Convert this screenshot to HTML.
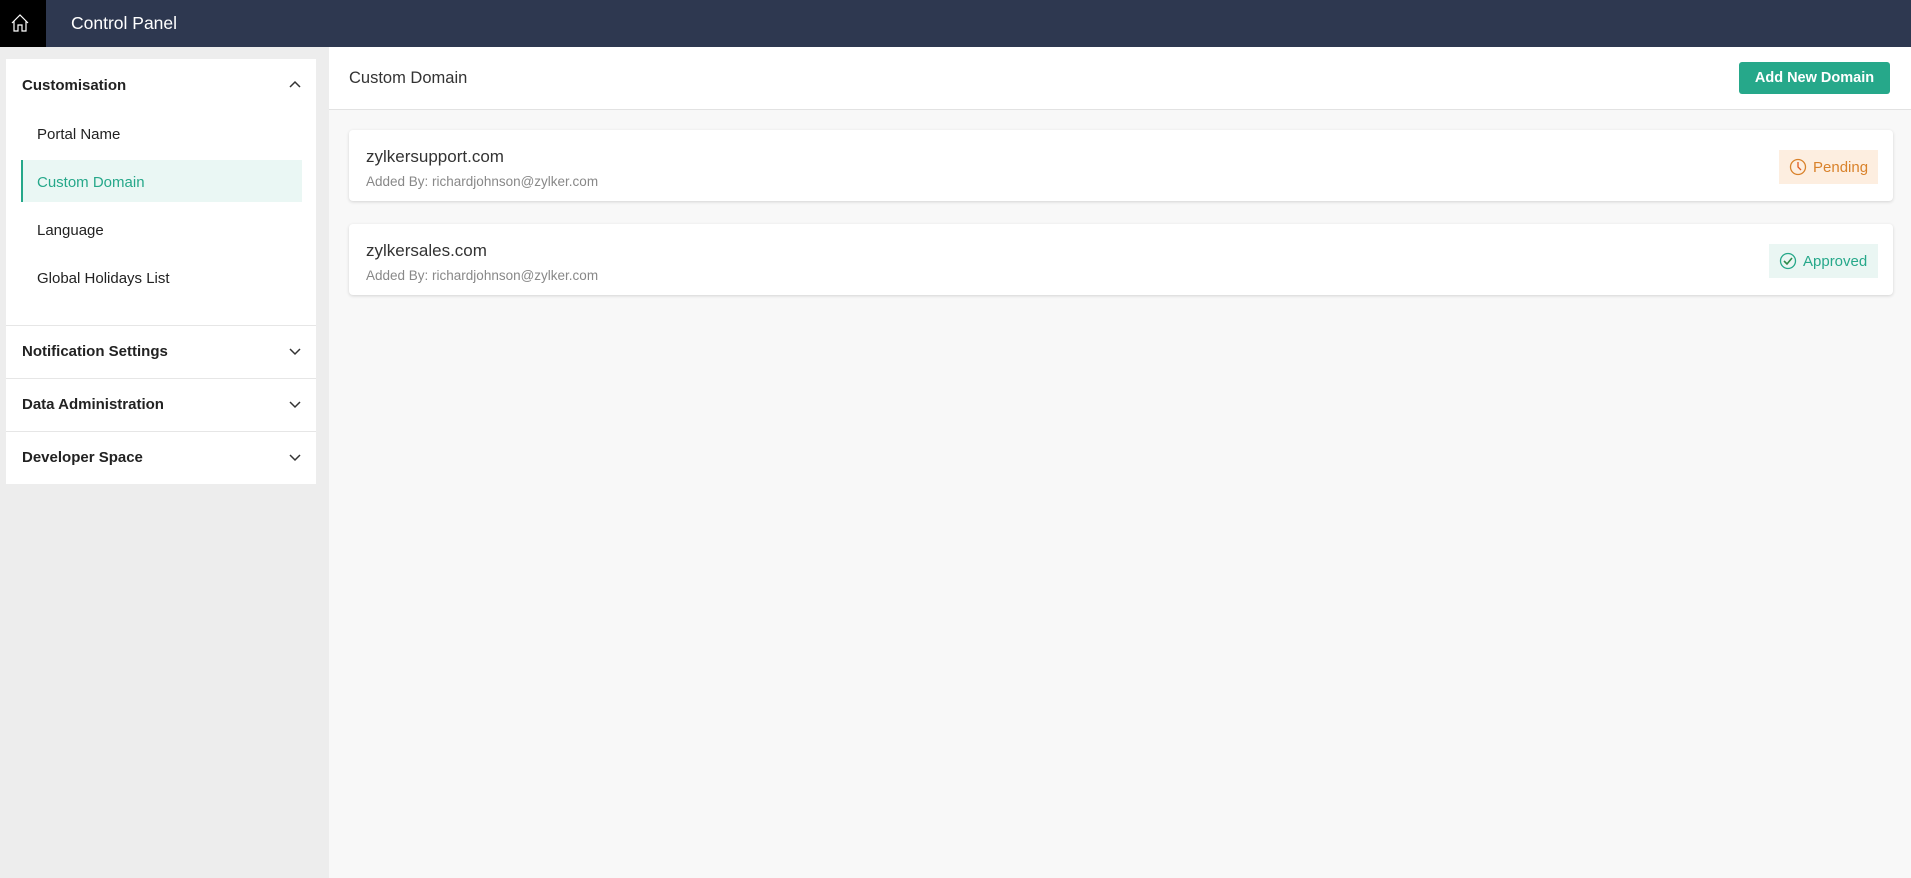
<!DOCTYPE html>
<html><head><style>
*{box-sizing:border-box;margin:0;padding:0}
body{width:1911px;height:878px;overflow:hidden;font-family:"Liberation Sans",sans-serif;background:#f8f8f8;position:relative}
.top{position:absolute;left:0;top:0;width:1911px;height:47px;background:#2e3850}
.home{position:absolute;left:0;top:0;width:46px;height:47px;background:#000}
.title{position:absolute;left:71px;top:13px;color:#fff;font-size:17.5px}
.side{position:absolute;left:0;top:47px;width:329px;height:831px;background:#ededed}
.panel{position:absolute;left:6px;top:59px;width:310px;height:425px;background:#fff}
.sec{position:absolute;left:16px;font-size:15px;font-weight:bold;color:#222}
.item{position:absolute;left:37px;font-size:15px;color:#222}
.div{position:absolute;left:6px;width:310px;height:1px;background:#e6e6e6}
.chev{position:absolute;left:288px}
.main{position:absolute;left:329px;top:47px;width:1582px;height:63px;background:#fff;border-bottom:1px solid #e2e2e2}
.card{position:absolute;left:349px;width:1544px;height:71px;background:#fff;border-radius:4px;box-shadow:0 1px 3px rgba(0,0,0,.15)}
.dn{position:absolute;left:17px;top:17px;font-size:17px;color:#333}
.by{position:absolute;left:17px;top:44px;font-size:13.5px;color:#888}
.badge{position:absolute;height:34px;top:20px;font-size:15px;display:flex;align-items:center;padding-left:10px}
</style></head><body>
<div class="top"><div class="home"><svg width="46" height="47" viewBox="0 0 46 47"><path d="M12 23 L20 15 L28 23 M14 21 V31 H18 V25 H22 V31 H26 V21" fill="none" stroke="#fff" stroke-width="1.2"/></svg></div>
<div class="title">Control Panel</div></div>
<div class="side"></div>
<div class="panel"></div>
<div class="sec" style="left:22px;top:77px">Customisation</div>
<svg class="chev" style="top:79px" width="14" height="10"><path d="M2 8 L7 3 L12 8" fill="none" stroke="#333" stroke-width="1.5"/></svg>
<div class="item" style="top:126px">Portal Name</div>
<div style="position:absolute;left:21px;top:160px;width:281px;height:42px;background:#eaf7f4;border-left:2px solid #26a88a"></div>
<div class="item" style="top:174px;color:#26a88a">Custom Domain</div>
<div class="item" style="top:222px">Language</div>
<div class="item" style="top:270px">Global Holidays List</div>
<div class="div" style="top:325px"></div>
<div class="sec" style="left:22px;top:343px">Notification Settings</div>
<svg class="chev" style="top:347px" width="14" height="10"><path d="M2 2 L7 7 L12 2" fill="none" stroke="#333" stroke-width="1.5"/></svg>
<div class="div" style="top:378px"></div>
<div class="sec" style="left:22px;top:396px">Data Administration</div>
<svg class="chev" style="top:400px" width="14" height="10"><path d="M2 2 L7 7 L12 2" fill="none" stroke="#333" stroke-width="1.5"/></svg>
<div class="div" style="top:431px"></div>
<div class="sec" style="left:22px;top:449px">Developer Space</div>
<svg class="chev" style="top:453px" width="14" height="10"><path d="M2 2 L7 7 L12 2" fill="none" stroke="#333" stroke-width="1.5"/></svg>
<div class="main"><div style="position:absolute;left:20px;top:22px;font-size:16.5px;color:#333">Custom Domain</div>
<div style="position:absolute;left:1410px;top:15px;width:151px;height:32px;background:#26a88a;border-radius:3px;color:#fff;font-size:14.5px;font-weight:600;text-align:center;line-height:32px">Add New Domain</div></div>
<div class="card" style="top:130px"><div class="dn">zylkersupport.com</div><div class="by">Added By: richardjohnson@zylker.com</div>
<div class="badge" style="left:1430px;width:99px;background:#fdeee0;color:#d9822b"><svg width="18" height="18" style="margin-right:6px"><circle cx="9" cy="9" r="7.5" fill="none" stroke="#d9822b" stroke-width="1.3"/><path d="M9 4 V9 L12 12" fill="none" stroke="#e05a20" stroke-width="1.3"/></svg>Pending</div></div>
<div class="card" style="top:224px"><div class="dn">zylkersales.com</div><div class="by">Added By: richardjohnson@zylker.com</div>
<div class="badge" style="left:1420px;width:109px;background:#eaf6f3;color:#26a88a"><svg width="18" height="18" style="margin-right:6px"><circle cx="9" cy="9" r="7.5" fill="none" stroke="#26a88a" stroke-width="1.3"/><path d="M5 9 L8 12 L13 6" fill="none" stroke="#2e8b4a" stroke-width="1.6"/></svg>Approved</div></div>
</body></html>
